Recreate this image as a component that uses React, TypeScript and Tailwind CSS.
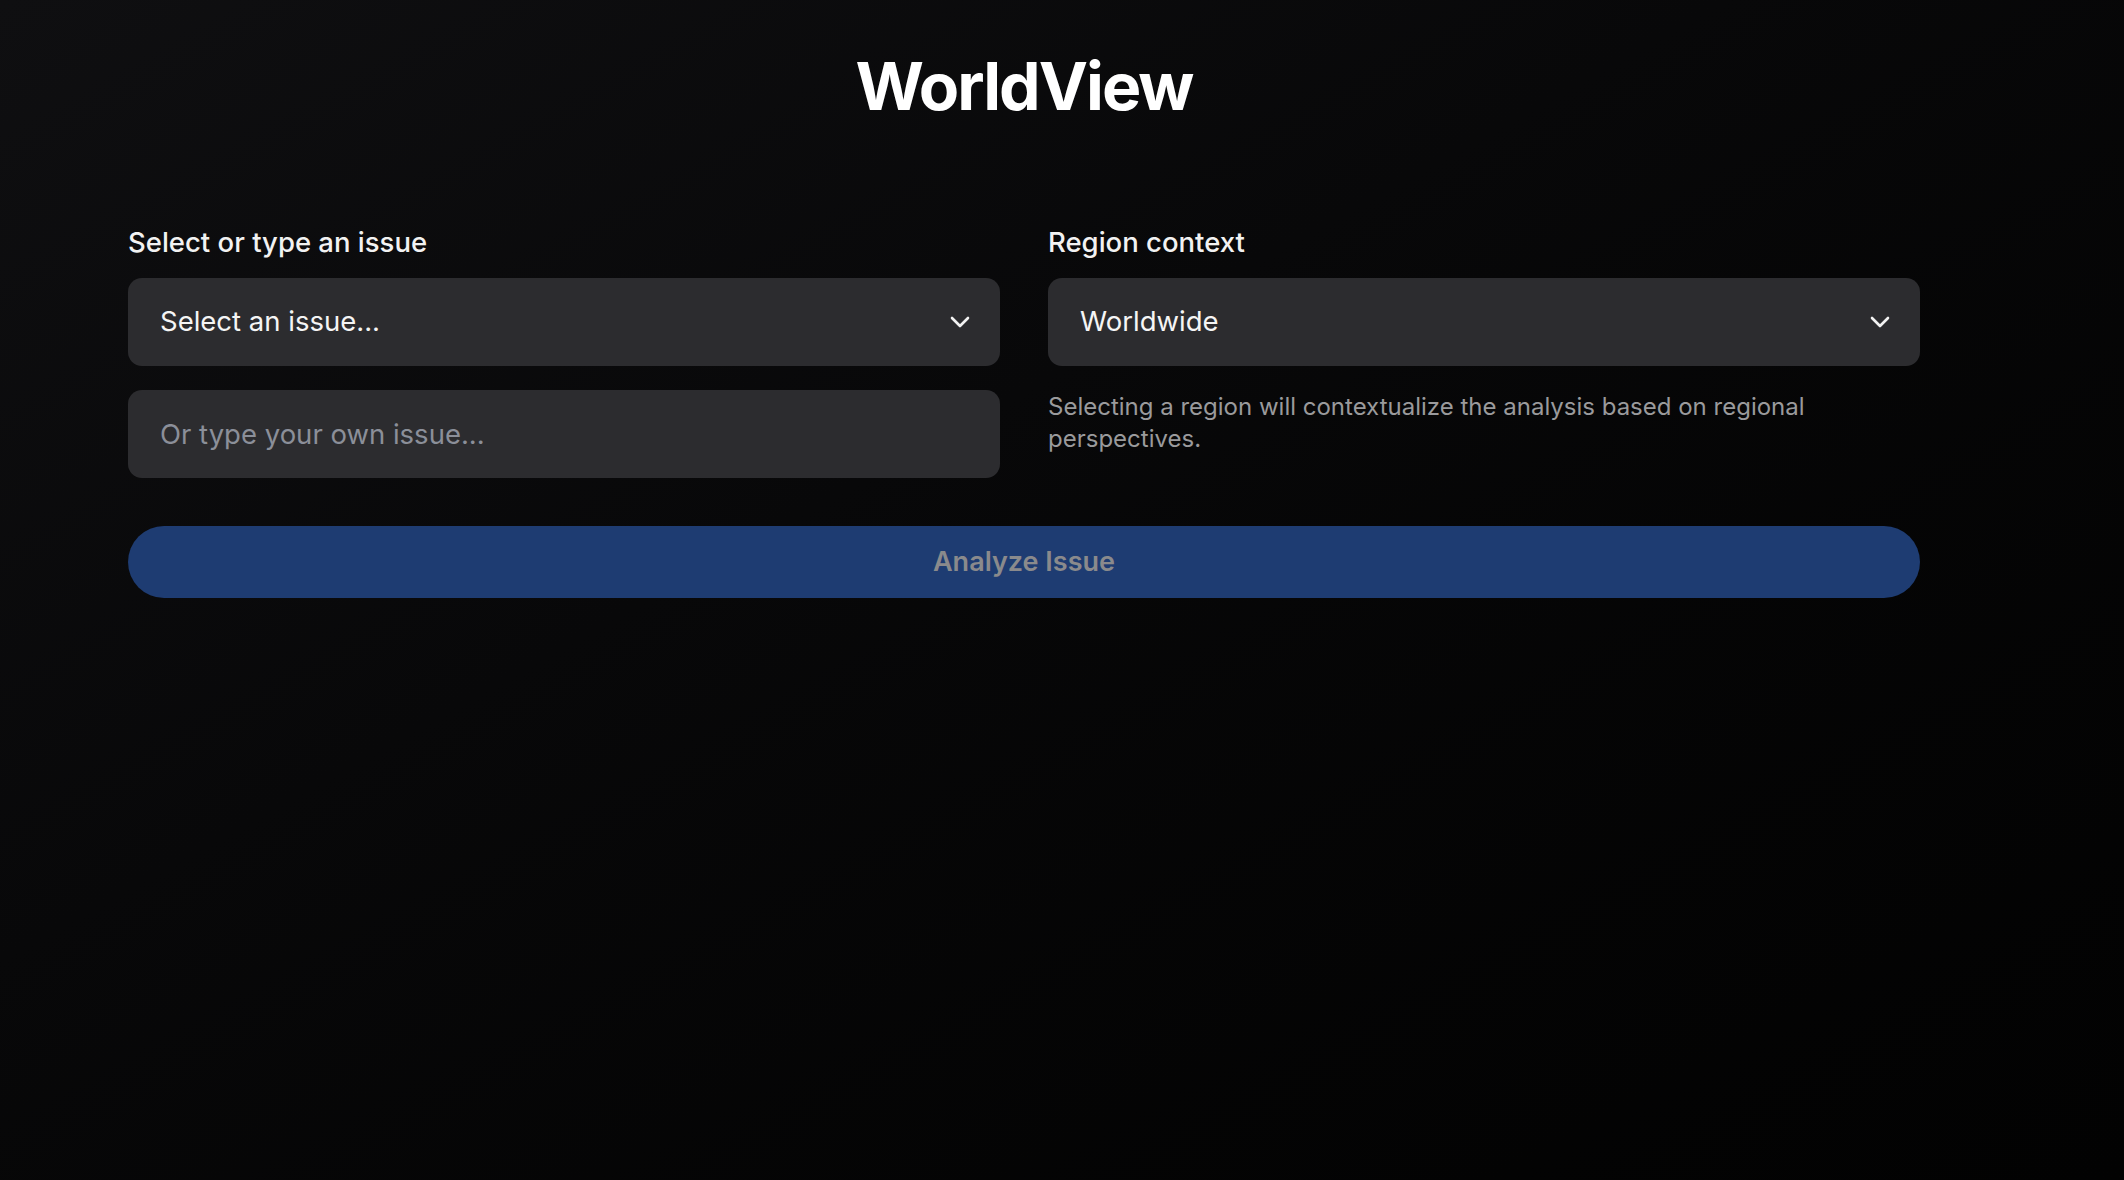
import React, { useState } from 'react';

const issues = ['Climate change', 'Immigration', 'Healthcare', 'Artificial intelligence', 'Trade policy'];
const regions = ['Worldwide', 'North America', 'Europe', 'Asia', 'Africa', 'Latin America', 'Middle East', 'Oceania'];

function Chevron() {
  return (
    <svg
      className="pointer-events-none absolute right-[30px] top-1/2 -translate-y-1/2"
      width="20"
      height="12"
      viewBox="0 0 20 12"
      fill="none"
      stroke="#f2f2f2"
      strokeWidth="2.6"
      strokeLinecap="round"
      strokeLinejoin="round"
    >
      <path d="M2 2l8 8 8-8" />
    </svg>
  );
}

export default function App() {
  const [issue, setIssue] = useState('');
  const [custom, setCustom] = useState('');
  const [region, setRegion] = useState('Worldwide');
  const canAnalyze = issue !== '' || custom.trim() !== '';

  return (
    <div className="min-h-screen bg-linear-to-br from-[#0f0f11] to-[#020202] font-['Inter','Liberation_Sans',sans-serif] text-white">
      <div className="pl-[128px] pr-[204px] pt-[53px]">
        {/* Title */}
        <h1 className="text-center text-[66px] font-bold leading-none tracking-[-0.03em] text-white">WorldView</h1>

        {/* Inputs */}
        <div className="mt-[105px] grid grid-cols-2 gap-x-[48px]">
          <div className="flex flex-col">
            <label className="text-[27.5px] font-medium leading-[36px] text-[#f2f2f2]">Select or type an issue</label>
            <div className="relative mt-[18px]">
              <select
                value={issue}
                onChange={(e) => setIssue(e.target.value)}
                className="h-[88px] w-full appearance-none rounded-[14px] bg-[#2c2c2f] pl-[32px] pr-[80px] text-[27.5px] text-[#f5f5f5] outline-none"
              >
                <option value="">Select an issue...</option>
                {issues.map((i) => (
                  <option key={i} value={i}>{i}</option>
                ))}
              </select>
              <Chevron />
            </div>
            <input
              value={custom}
              onChange={(e) => setCustom(e.target.value)}
              placeholder="Or type your own issue..."
              className="mt-[24px] h-[88px] w-full rounded-[14px] bg-[#2c2c2f] px-[32px] text-[27.5px] text-[#f5f5f5] outline-none placeholder:text-[#8b8f99]"
            />
          </div>

          <div className="flex flex-col">
            <label className="text-[27.5px] font-medium leading-[36px] text-[#f2f2f2]">Region context</label>
            <div className="relative mt-[18px]">
              <select
                value={region}
                onChange={(e) => setRegion(e.target.value)}
                className="h-[88px] w-full appearance-none rounded-[14px] bg-[#2c2c2f] pl-[32px] pr-[80px] text-[27.5px] text-[#f5f5f5] outline-none"
              >
                {regions.map((r) => (
                  <option key={r} value={r}>{r}</option>
                ))}
              </select>
              <Chevron />
            </div>
            <p className="mt-[25px] text-[24px] leading-[32px] text-[#9a9a9c]">
              Selecting a region will contextualize the analysis based on regional perspectives.
            </p>
          </div>
        </div>

        {/* Action */}
        <button
          disabled={!canAnalyze}
          className="mt-[48px] h-[72px] w-full rounded-full bg-[#1e3c72] text-[27px] font-semibold text-[#8a8a8c]"
        >
          Analyze Issue
        </button>
      </div>
    </div>
  );
}
